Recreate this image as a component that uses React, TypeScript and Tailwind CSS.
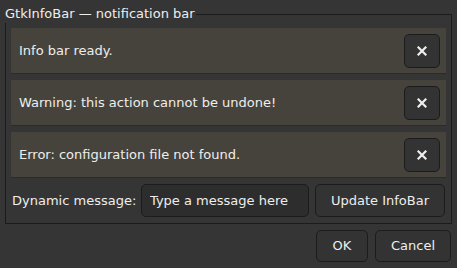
const messages = [
  'Info bar ready.',
  'Warning: this action cannot be undone!',
  'Error: configuration file not found.',
];

function CloseButton() {
  return (
    <button className="flex h-[34px] w-[36px] shrink-0 items-center justify-center rounded-[5px] border border-[#1c1c1c] bg-[#333333]">
      <svg width="10" height="10" viewBox="0 0 10 10">
        <path d="M1.5 1.5 L8.5 8.5 M8.5 1.5 L1.5 8.5" stroke="#eeeeec" strokeWidth="2.2" strokeLinecap="square" />
      </svg>
    </button>
  );
}

export default function App() {
  return (
    <div
      className="flex h-[268px] w-[457px] flex-col bg-[#353535] text-[13px] text-[#eeeeec]"
      style={{ fontFamily: '"DejaVu Sans", sans-serif' }}
    >
      <div className="relative ml-[5px] mr-[5px] mt-[14px] flex h-[210px] flex-col gap-[6px] border border-[#1b1b1b] px-[5px] pb-[5px] pt-[13px]">
        <span className="absolute left-[-1px] top-[-9px] bg-[#353535] pb-[1px] pr-[1px] leading-[16px]">
          GtkInfoBar — notification bar
        </span>
        {messages.map((m) => (
          <div
            key={m}
            className="flex h-[46px] items-center justify-between border-b border-[#2c2b28] bg-[#46433d] pl-[8px] pr-[6px]"
          >
            <span>{m}</span>
            <CloseButton />
          </div>
        ))}
        <div className="flex h-[33px] items-center gap-[6px]">
          <span className="w-[124px] shrink-0 whitespace-nowrap pl-px">Dynamic message:</span>
          <input
            defaultValue="Type a message here"
            className="h-[33px] w-[168px] shrink-0 rounded-[5px] border border-[#1c1c1c] bg-[#2d2d2d] px-[8px] text-[#eeeeec] outline-none"
          />
          <button className="h-[33px] w-[130px] shrink-0 rounded-[5px] border border-[#1c1c1c] bg-[#333333]">
            Update InfoBar
          </button>
        </div>
      </div>
      <div className="mr-[6px] mt-[6px] flex justify-end gap-[7px]">
        <button className="h-[32px] w-[52px] rounded-[5px] border border-[#1c1c1c] bg-[#333333]">OK</button>
        <button className="h-[32px] w-[76px] rounded-[5px] border border-[#1c1c1c] bg-[#333333]">Cancel</button>
      </div>
    </div>
  );
}
